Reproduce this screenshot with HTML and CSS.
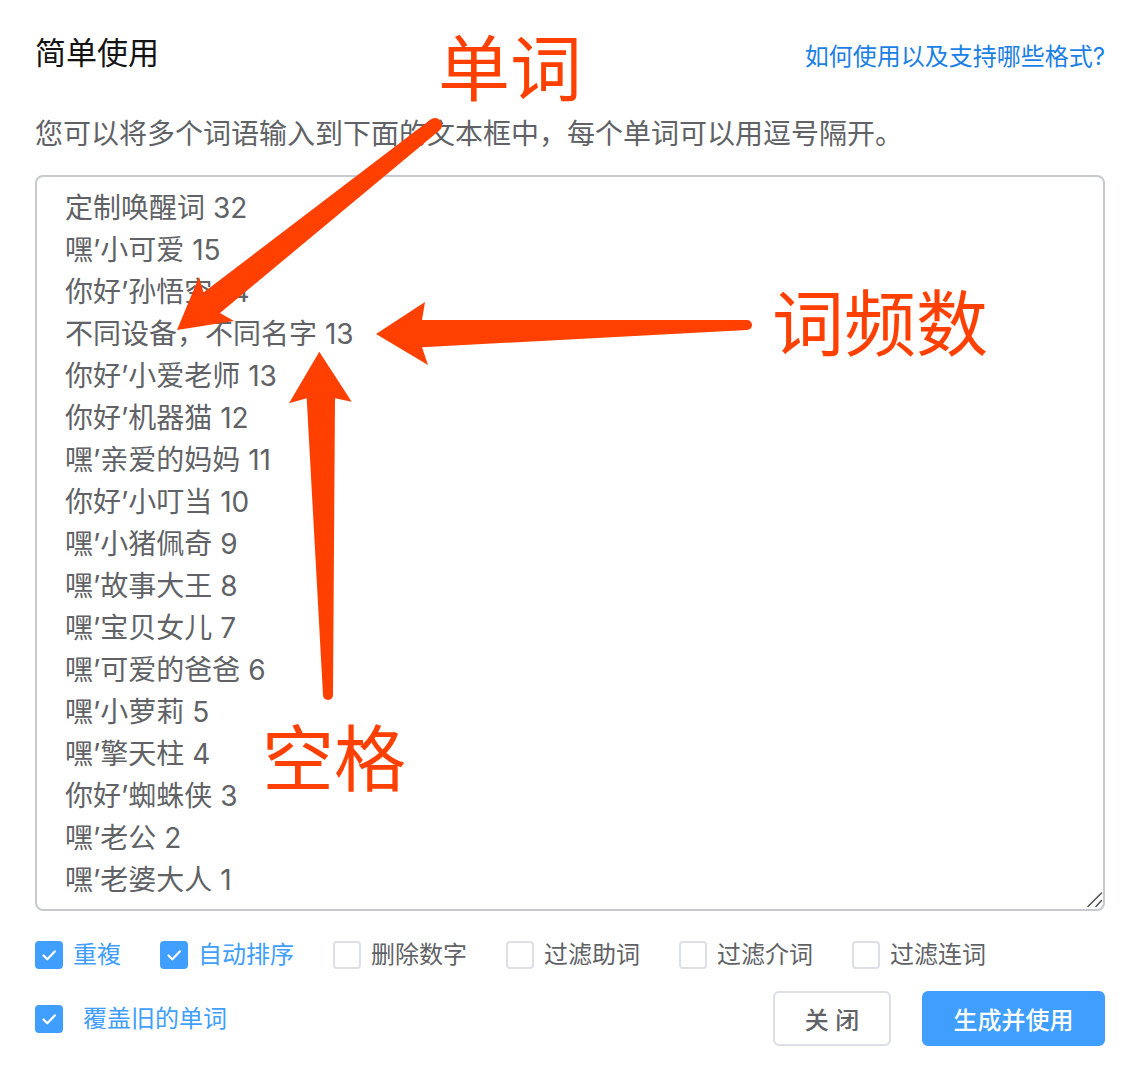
FILE: index.html
```html
<!DOCTYPE html>
<html lang="zh-CN">
<head>
<meta charset="utf-8">
<title>简单使用</title>
<link rel="stylesheet" href="styles.css">
</head>
<body>
<div class="page">
  <div class="header">
    <h2 class="title">简单使用</h2>
    <a class="help" href="#">如何使用以及支持哪些格式?</a>
  </div>
  <p class="desc">您可以将多个词语输入到下面的文本框中，每个单词可以用逗号隔开。</p>
  <div class="field">
  <textarea class="words" spellcheck="false">定制唤醒词 32
嘿’小可爱 15
你好’孙悟空 14
不同设备，不同名字 13
你好’小爱老师 13
你好’机器猫 12
嘿’亲爱的妈妈 11
你好’小叮当 10
嘿’小猪佩奇 9
嘿’故事大王 8
嘿’宝贝女儿 7
嘿’可爱的爸爸 6
嘿’小萝莉 5
嘿’擎天柱 4
你好’蜘蛛侠 3
嘿’老公 2
嘿’老婆大人 1</textarea>
    <svg class="grip" viewBox="0 0 18 18" width="18" height="18"><line x1="16.5" y1="2" x2="3" y2="15.5"/><line x1="16.5" y1="9.5" x2="11" y2="15.5"/></svg>
  </div>
  <div class="options">
    <label class="opt checked"><span class="box"><svg viewBox="0 0 28 28" class="tick"><polyline points="8.5,14.5 12.3,18.3 19.8,10.4"/></svg></span><span class="lbl">重複</span></label>
    <label class="opt checked"><span class="box"><svg viewBox="0 0 28 28" class="tick"><polyline points="8.5,14.5 12.3,18.3 19.8,10.4"/></svg></span><span class="lbl">自动排序</span></label>
    <label class="opt"><span class="box"></span><span class="lbl">删除数字</span></label>
    <label class="opt"><span class="box"></span><span class="lbl">过滤助词</span></label>
    <label class="opt"><span class="box"></span><span class="lbl">过滤介词</span></label>
    <label class="opt"><span class="box"></span><span class="lbl">过滤连词</span></label>
  </div>
  <div class="footer">
    <label class="opt checked wide"><span class="box"><svg viewBox="0 0 28 28" class="tick"><polyline points="8.5,14.5 12.3,18.3 19.8,10.4"/></svg></span><span class="lbl">覆盖旧的单词</span></label>
    <div class="actions">
      <button class="btn">关 闭</button>
      <button class="btn primary">生成并使用</button>
    </div>
  </div>

  <div class="annot">
    <svg class="arrows" viewBox="0 0 1136 1076" width="1136" height="1076">
      <polygon points="177,330 199,277 203.5,292.5 430.6,119.5 439.4,130.5 220,313 234,321"/>
      <circle cx="435" cy="125" r="7"/>
      <polygon points="376,334 425,302 422,320 747,320 747,330 422,347.3 428,365"/>
      <circle cx="747" cy="325" r="5"/>
      <polygon points="319.3,351.7 289,403.3 306.7,398.3 323,695 333,695 335,398.3 351.7,401.7"/>
      <circle cx="328" cy="695" r="5"/>
    </svg>
    <div class="note note-word">单词</div>
    <div class="note note-freq">词频数</div>
    <div class="note note-space">空格</div>
  </div>
</div>
</body>
</html>
```

FILE: styles.css
```css
html, body {
  margin: 0;
  padding: 0;
  background: #ffffff;
}

body {
  font-family: Inter, "Noto Sans CJK SC", sans-serif;
}

.page {
  position: relative;
  width: 1136px;
  height: 1076px;
  box-sizing: border-box;
  padding: 30px 31px 0 35px;
  overflow: hidden;
}

.header {
  display: flex;
  justify-content: space-between;
  align-items: flex-end;
}

.title {
  margin: 0;
  font-size: 31px;
  line-height: 45px;
  font-weight: 400;
  color: #141414;
}

.help {
  font-size: 24px;
  line-height: 36px;
  color: #1b7fe6;
  text-decoration: none;
}

.desc {
  margin: 38px 0 0;
  font-size: 28px;
  line-height: 42px;
  color: #606266;
}

.field {
  position: relative;
  margin-top: 20px;
}

.words {
  display: block;
  margin: 0;
  width: 100%;
  height: 736px;
  box-sizing: border-box;
  border: 2px solid #c6c9cf;
  border-radius: 8px;
  padding: 10px 28px;
  font-family: Inter, "Noto Sans CJK SC", sans-serif;
  font-size: 28px;
  line-height: 42px;
  color: #606266;
  background: #fff;
  outline: none;
  overflow: hidden;
  resize: none;
}

.grip {
  position: absolute;
  right: 2px;
  bottom: 2px;
}

.grip line {
  stroke: #555;
  stroke-width: 1.6;
  stroke-linecap: round;
}

.options {
  margin-top: 23px;
  display: flex;
  align-items: center;
  height: 42px;
}

.opt {
  display: flex;
  align-items: center;
  margin-right: 39px;
  font-size: 24px;
  line-height: 36px;
  color: #606266;
}

.box {
  width: 28px;
  height: 28px;
  box-sizing: border-box;
  border: 2px solid #dcdfe6;
  border-radius: 4px;
  background: #fff;
  margin-right: 10px;
  display: flex;
}

.opt.checked .box {
  background: #409eff;
  border-color: #409eff;
}

.opt.checked .lbl {
  color: #409eff;
}

.tick {
  width: 28px;
  height: 28px;
  margin: -2px;
}

.tick polyline {
  fill: none;
  stroke: #ffffff;
  stroke-width: 2.2;
  stroke-linecap: round;
  stroke-linejoin: round;
}

.footer {
  margin-top: 15px;
  display: flex;
  justify-content: space-between;
  align-items: center;
}

.opt.wide .box {
  margin-right: 20px;
}

.actions {
  display: flex;
  gap: 31px;
}

.btn {
  height: 55px;
  box-sizing: border-box;
  border: 2px solid #dcdfe6;
  border-radius: 6px;
  background: #fff;
  font-family: Inter, "Noto Sans CJK SC", sans-serif;
  font-size: 24px;
  font-weight: 500;
  color: #606266;
  width: 118px;
  padding: 0;
}

.btn.primary {
  width: 183px;
  background: #409eff;
  border-color: #409eff;
  color: #fff;
}

.annot {
  position: absolute;
  left: 0;
  top: 0;
  width: 1136px;
  height: 1076px;
  pointer-events: none;
}

.arrows {
  position: absolute;
  left: 0;
  top: 0;
}

.arrows polygon,
.arrows circle {
  fill: #ff4000;
}

.note {
  position: absolute;
  font-family: "Noto Sans CJK SC", sans-serif;
  font-size: 72px;
  line-height: 72px;
  color: #ff4000;
  white-space: nowrap;
}

.note-word { left: 438px; top: 28px; }
.note-freq { left: 772px; top: 283px; }
.note-space { left: 262px; top: 718px; }
```
